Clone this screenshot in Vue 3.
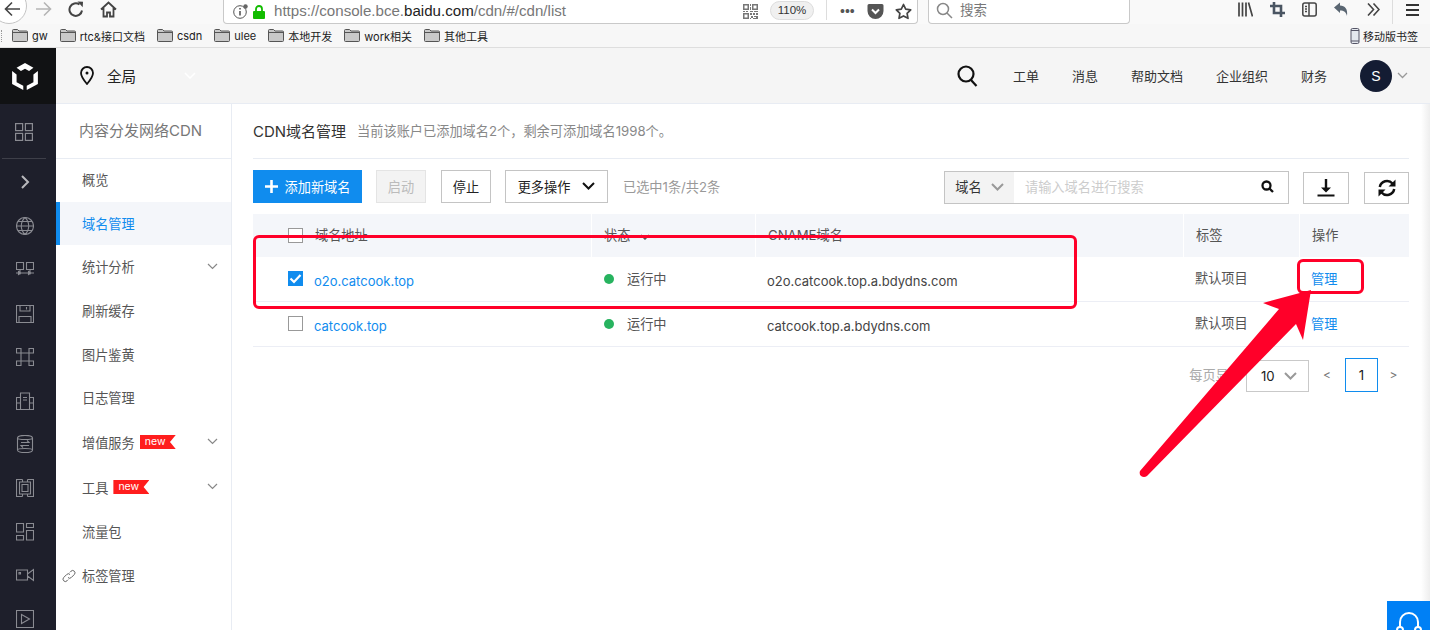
<template>
  <div class="page">
    <!-- browser chrome -->
    <div class="chrome">
      <div class="nav-btns">
        <span class="back">
          <svg width="17" height="16" viewBox="0 0 17 16" fill="none" stroke="#444" stroke-width="1.6"><path d="M16 8H2M8 1.500L1.500 8 8 14.500" /></svg>
        </span>
        <svg class="fwd" width="17" height="16" viewBox="0 0 17 16" fill="none" stroke="#b5b5b5" stroke-width="1.6"><path d="M1 8h14M9 1.500L15.500 8 9 14.500" /></svg>
        <svg class="reload" width="16" height="16" viewBox="0 0 16 16" fill="none" stroke="#444" stroke-width="2"><path d="M14 9.500A6.300 6.300 0 1 1 11.500 3.500" /><path d="M9.500 .5l5.500.3-.3 5.500z" fill="#444" stroke="none" /></svg>
        <svg class="home" width="17" height="17" viewBox="0 0 17 17" fill="none" stroke="#444" stroke-width="1.800"><path d="M1 8.500L8.500 1.500l7.500 7M3.500 7v8.500h3.500v-4h3v4h3.500V7" /></svg>
      </div>
      <div class="urlbar">
        <svg width="16" height="15" viewBox="0 0 16 15" fill="none" stroke="#555"><circle cx="7" cy="8" r="6.300" /><path d="M7 7v4.500M7 4v1.500" stroke-width="1.600" /><circle cx="12.500" cy="2.500" r="2.200" fill="#666" stroke="none" /></svg>
        <svg class="lock" width="12" height="14" viewBox="0 0 12 14" fill="#12bc00"><path d="M1 6h10a1 1 0 0 1 1 1v6a1 1 0 0 1-1 1H1a1 1 0 0 1-1-1V7a1 1 0 0 1 1-1z" /><path d="M3 7V4a3 3 0 0 1 6 0v3" fill="none" stroke="#12bc00" stroke-width="1.800" /></svg>
        <span class="url">https://console.bce.<b>baidu.com</b>/cdn/#/cdn/list</span>
        <svg class="qr" width="15" height="15" viewBox="0 0 15 15" fill="#777"><path d="M0 0h6v6H0zM9 0h6v6H9zM0 9h6v6H0zM1.500 1.500v3h3v-3zM10.500 1.500v3h3v-3zM1.500 10.500v3h3v-3zM7 0h1v2H7zM7 3h1v3H7zM0 7h2v1H0zM3 7h2v1H3zM7 7h3v1H7zM11 7h4v1h-4zM7 9h2v2H7zM10 9h2v2h-2zM13 9h2v2h-2zM8 12h2v2H8zM11 12h2v1h-2zM7 14h1v1H7zM13 12h2v3h-2zM10 14h3v1h-3z" fill-rule="evenodd" /></svg>
        <span class="zoom-pill">110%</span>
        <span class="divider"></span>
        <span class="dots">•••</span>
        <svg class="pocket" width="17" height="15" viewBox="0 0 16 15"><path d="M1.500 0h13A1.500 1.500 0 0 1 16 1.500V7A8 8 0 0 1 0 7V1.500A1.500 1.500 0 0 1 1.500 0z" fill="#555" /><path d="M4.500 5.500L8 9l3.500-3.500" fill="none" stroke="#fff" stroke-width="2" /></svg>
        <svg class="star" width="17" height="17" viewBox="0 0 17 17" fill="none" stroke="#444" stroke-width="1.700"><path d="M8.500 1.500l2.200 4.600 5 .7-3.600 3.500.9 5-4.500-2.400L4 15.300l.9-5L1.300 6.800l5-.7z" stroke-linejoin="round" /></svg>
      </div>
      <div class="searchbar">
        <svg width="17" height="17" viewBox="0 0 17 17" fill="none" stroke="#888" stroke-width="1.500"><circle cx="7" cy="7" r="5.500" /><path d="M11 11l5 5" /></svg>
        <span>搜索</span>
      </div>
      <div class="tools">
        <svg class="t1" width="15" height="15" viewBox="0 0 15 15" fill="none" stroke="#444" stroke-width="1.700"><path d="M1 .5v14M4.500 .5v14M8 .5v14M10.500 .5l4 14" /></svg>
        <svg class="t2" width="15" height="15" viewBox="0 0 15 15" fill="none" stroke="#4a5562" stroke-width="2.600"><path d="M4 0v11h11M0 4h11v11" /></svg>
        <svg class="t3" width="15" height="15" viewBox="0 0 15 15" fill="none" stroke="#444" stroke-width="1.500"><rect x=".8" y="1" width="13.400" height="13" rx="2" /><path d="M7 1v13M3 4.500h2M3 7h2M3 9.500h2" /></svg>
        <svg class="t4" width="15" height="15" viewBox="0 0 15 15"><path d="M0 5.500L6 .5v3c5 0 8 3.500 7 10.500-1-4-3-5.500-7-5.500v2.500z" fill="#5a6672" /></svg>
        <svg class="t5" width="13" height="13" viewBox="0 0 13 13" fill="none" stroke="#444" stroke-width="1.600"><path d="M1 .5l5.500 6-5.500 6M6.500 .5l5.500 6-5.500 6" /></svg>
        <span class="tool-div"></span>
        <svg class="t6" width="13" height="12" viewBox="0 0 13 12" fill="#333"><path d="M0 0h13v2H0zM0 5h13v2H0zM0 10h13v2H0z" /></svg>
      </div>
    </div>

    <div class="bookmarks">
      <span class="grip"></span>
      <span v-for="b in bookmarks" :key="b" class="bm">
        <svg width="16" height="13" viewBox="0 0 16 13"><path d="M.5 1.500a1 1 0 0 1 1-1h4l1.500 1.500h7.500a1 1 0 0 1 1 1v8.500a1 1 0 0 1-1 1h-13a1 1 0 0 1-1-1z" fill="#c9c9c9" stroke="#555" /><path d="M.5 3.500h15" stroke="#555" /></svg>
        {{ b }}
      </span>
      <span class="bm mobile">
        <svg width="10" height="16" viewBox="0 0 10 16"><rect x="1" y=".5" width="8" height="15" rx="1.500" fill="#e4e8ee" stroke="#556" /><path d="M1 2.500h8M1 13h8" stroke="#556" /></svg>
        移动版书签
      </span>
    </div>

    <div class="console">
      <aside class="rail">
        <div class="logo">
          <svg width="26" height="27" viewBox="0 0 25.400 26.600" fill="#fff"><path d="M12.700 0L21 4.700 16.700 8l-4-2.400L8.700 8 4.400 4.700zM0 8l4.400 3.300V19l6.600 3.300v4.300L0 20.600zM25.400 8L21 11.300V19l-6.600 3.300v4.300l11-6z" /></svg>
        </div>
        <div class="rail-top">
          <svg width="18" height="18" viewBox="0 0 18 18" fill="none" stroke="#8a8b92" stroke-width="1.200"><rect x=".6" y=".6" width="7" height="7" /><rect x="10.400" y=".6" width="7" height="7" /><rect x=".6" y="10.400" width="7" height="7" /><rect x="10.400" y="10.400" width="7" height="7" /></svg>
        </div>
        <div class="rail-item toggle">
          <svg width="10" height="14" viewBox="0 0 10 14" fill="none" stroke="#b8b8bc" stroke-width="2"><path d="M2 1l6 6-6 6" /></svg>
        </div>
        <div v-for="(icon, i) in railIcons" :key="i" class="rail-item">
          <svg width="18" height="18" viewBox="0 0 18 18" fill="none" stroke="#8a8b92" stroke-width="1.100">
            <path :d="icon" />
          </svg>
        </div>
      </aside>

      <div class="body">
        <header class="topbar">
          <div class="region">
            <svg width="14" height="19" viewBox="0 0 14 19" fill="none" stroke="#111" stroke-width="1.800"><path d="M7 1a6 6 0 0 1 6 6c0 4-6 11-6 11S1 11 1 7a6 6 0 0 1 6-6z" /><circle cx="7" cy="7" r="1.500" fill="#111" stroke="none" /></svg>
            <span>全局</span>
            <svg class="faint" width="12" height="7" viewBox="0 0 12 7" fill="none" stroke="#fff" stroke-width="1.500"><path d="M1 1l5 5 5-5" /></svg>
          </div>
          <div class="topnav">
            <svg width="21" height="22" viewBox="0 0 21 22" fill="none" stroke="#111" stroke-width="2.200"><circle cx="9" cy="9" r="7.500" /><path d="M14 15l5.500 6" /></svg>
            <a v-for="t in topLinks" :key="t">{{ t }}</a>
          </div>
          <div class="user">
            <span class="avatar">S</span>
            <svg width="11" height="7" viewBox="0 0 11 7" fill="none" stroke="#999" stroke-width="1.300"><path d="M1 1l4.500 4.500L10 1" /></svg>
          </div>
        </header>

        <div class="columns">
          <nav class="side">
            <div class="side-title">内容分发网络CDN</div>
            <div v-for="m in menu" :key="m.label" class="side-item" :class="{ active: m.active, tall: m.isNew, last: m.last }">
              <svg v-if="m.link" class="link" width="14" height="14" viewBox="0 0 14 14" fill="none" stroke="#666" stroke-width="1"><path d="M6 8.500a2.300 2.300 0 0 0 3.300 0l3-3a2.300 2.300 0 0 0-3.300-3.300L7.800 3.400M8 5.500a2.300 2.300 0 0 0-3.300 0l-3 3a2.300 2.300 0 0 0 3.300 3.300l1.200-1.200" /></svg>
              <span>{{ m.label }}</span>
              <span v-if="m.isNew" class="new-tag">new</span>
              <svg v-if="m.arrow" class="arrow" width="11" height="7" viewBox="0 0 11 7" fill="none" stroke="#888" stroke-width="1.200"><path d="M1 1l4.500 4.500L10 1" /></svg>
            </div>
          </nav>

          <main class="main">
            <div class="heading">
              <h1>CDN域名管理</h1>
              <span>当前该账户已添加域名2个，剩余可添加域名1998个。</span>
            </div>

            <div class="toolbar">
              <button class="btn primary">
                <svg width="13" height="13" viewBox="0 0 13 13" fill="#fff"><path d="M5.200 0h2.600v5.200H13v2.600H7.800V13H5.200V7.800H0V5.200h5.200z" /></svg>
                添加新域名
              </button>
              <button class="btn disabled">启动</button>
              <button class="btn">停止</button>
              <button class="btn more">
                更多操作
                <svg width="13" height="9" viewBox="0 0 13 9" fill="none" stroke="#111" stroke-width="2"><path d="M1 1l5.500 5.500L12 1" /></svg>
              </button>
              <span class="selected">已选中1条/共2条</span>
              <div class="search">
                <div class="search-type">
                  域名
                  <svg width="13" height="8" viewBox="0 0 13 8" fill="none" stroke="#999" stroke-width="2"><path d="M1 1l5.500 5.500L12 1" /></svg>
                </div>
                <span class="placeholder">请输入域名进行搜索</span>
                <svg class="search-icon" width="13" height="13" viewBox="0 0 13 13" fill="none" stroke="#111" stroke-width="2.300"><circle cx="5.500" cy="5.500" r="4" /><path d="M8.500 8.500l3.500 3.500" /></svg>
              </div>
              <button class="icon-btn">
                <svg width="18" height="18" viewBox="0 0 18 18" fill="#111"><path d="M7.800 0h2.400v8.500H14L9 13.500 4 8.500h3.800zM.5 15.500h17v2H.5z" /></svg>
              </button>
              <button class="icon-btn">
                <svg width="18" height="18" viewBox="0 0 18 18" fill="none" stroke="#111" stroke-width="2.500"><path d="M1.800 8A7.300 7.300 0 0 1 14.500 4.500M16.200 10A7.300 7.300 0 0 1 3.500 13.500" /><path d="M17.500 .5v7h-7zM.5 17.500v-7h7z" fill="#111" stroke="none" /></svg>
              </button>
            </div>

            <table class="grid">
              <colgroup>
                <col style="width: 338px" />
                <col style="width: 164px" />
                <col style="width: 428px" />
                <col style="width: 116px" />
                <col />
              </colgroup>
              <thead>
                <tr>
                  <th><span class="check"></span>域名地址</th>
                  <th>状态 <svg class="sort" width="10" height="6" viewBox="0 0 10 6" fill="none" stroke="#555" stroke-width="1.500"><path d="M1 1l4 4 4-4" /></svg></th>
                  <th>CNAME域名</th>
                  <th>标签</th>
                  <th>操作</th>
                </tr>
              </thead>
              <tbody>
                <tr v-for="row in rows" :key="row.domain">
                  <td class="latin">
                    <span class="check" :class="{ on: row.checked }">
                      <svg v-if="row.checked" width="15" height="15" viewBox="0 0 15 15" fill="none" stroke="#fff" stroke-width="2.200"><path d="M2.500 7.500l3.500 3.500 6.500-7" /></svg>
                    </span>
                    <a>{{ row.domain }}</a>
                  </td>
                  <td class="status"><i class="dot"></i>运行中</td>
                  <td class="latin">{{ row.cname }}</td>
                  <td class="tag">默认项目</td>
                  <td class="op"><a>管理</a></td>
                </tr>
              </tbody>
            </table>

            <div class="pager">
              <span class="pp">每页显示</span>
              <div class="size">
                10
                <svg width="13" height="8" viewBox="0 0 13 8" fill="none" stroke="#999" stroke-width="2"><path d="M1 1l5.500 5.500L12 1" /></svg>
              </div>
              <span class="pg-arrow">&lt;</span>
              <span class="pg-num">1</span>
              <span class="pg-arrow">&gt;</span>
            </div>
          </main>
        </div>
      </div>
    </div>

    <div class="scroll-shade"></div>
    <div class="help">
      <svg width="28" height="29" viewBox="0 0 28 29" fill="none" stroke="#fff" stroke-width="2"><path d="M5 18v-6a9 9 0 0 1 18 0v6" /><rect x="2" y="17" width="6" height="12" rx="3" /><rect x="20" y="17" width="6" height="12" rx="3" /></svg>
    </div>

    <!-- hand-drawn annotations on top of the screenshot -->
    <div class="note note-row"></div>
    <div class="note note-op"></div>
    <svg class="note-arrow" width="1430" height="630" viewBox="0 0 1430 630">
      <path d="M1311 290L1263 303L1279 309L1140 471Q1139 474 1141 476Q1144 478 1147 476L1296 324L1303 340Z" fill="#ff0029" />
    </svg>
  </div>
</template>

<script setup>
const bookmarks = ['gw', 'rtc&接口文档', 'csdn', 'ulee', '本地开发', 'work相关', '其他工具'];
const topLinks = ['工单', '消息', '帮助文档', '企业组织', '财务'];

const railIcons = [
  // globe
  'M9 .5a8.500 8.500 0 1 0 0 17 8.500 8.500 0 0 0 0-17zM.5 9h17M2 4.500h14M2 13.500h14M9 .5c-5 5-5 12 0 17M9 .5c5 5 5 12 0 17',
  // network
  'M.5 1.500h7v7h-7zM10.500 1.500h7v7h-7zM4 8.500v5M14 8.500v5M0 12h18M2.500 10.500v3L5 12zM12.500 10.500v3L15 12z',
  // floppy
  'M.5 .5h17v17H.5zM4 .5v5.500h10V.5M10.500 2v2.500M3 17.500v-6h12v6',
  // cmd
  'M.5 .5h4.500v4.500H.5zM13 .5h4.500v4.500H13zM.5 13h4.500v4.500H.5zM13 13h4.500v4.500H13zM5 5h8v8H5z',
  // building
  'M4.500 17.500V1h9v16.500M.5 5.500h4v12h-4zM13.500 5.500h4v12h-4zM7 5.500h4M7 8h4M.5 11h4M13.500 11h4M4.500 17.500h9',
  // cylinder
  'M1.500 3c0-3.500 15-3.500 15 0v12c0 3.500-15 3.500-15 0zM1.500 3c0 2 15 2 15 0M1.500 15c0-2 15-2 15 0M5 7.500h8l-2-2M13 10.500H5l2 2',
  // chip
  'M6.500 .5H.5v17h6M11.500 .5h6v17h-6M6.500 .5V3h5V.5M6.500 17.500V15h5v2.500M3.500 3h11v12h-11zM6 5.500h6v7H6z',
  // panels
  'M.5 .5h7v8.500h-7zM10.500 .5h7v4h-7zM.5 12.500h7v4.500h-7zM10.500 7.500h7v9.500h-7z',
  // video
  'M.5 4h11v10H.5zM11.500 8l6-4.500v11L11.500 10M3 6.500h1.500V8H3z',
  // play
  'M.5 .5h17v17H.5zM5.500 4.500l8 4.500-8 4.500z',
];

const menu = [
  { label: '概览' },
  { label: '域名管理', active: true },
  { label: '统计分析', arrow: true },
  { label: '刷新缓存' },
  { label: '图片鉴黄' },
  { label: '日志管理' },
  { label: '增值服务', isNew: true, arrow: true },
  { label: '工具', isNew: true, arrow: true },
  { label: '流量包', last: true },
  { label: '标签管理', link: true, last: true },
];

const rows = [
  { domain: 'o2o.catcook.top', cname: 'o2o.catcook.top.a.bdydns.com', checked: true },
  { domain: 'catcook.top', cname: 'catcook.top.a.bdydns.com', checked: false },
];
</script>

<style>
html,
body {
  margin: 0;
  overflow: hidden;
  background: #fff;
}
</style>

<style scoped>
.page {
  position: relative;
  width: 1430px;
  height: 630px;
  overflow: hidden;
  font-family: Inter, "Noto Sans CJK SC", sans-serif;
  font-size: 13.2px;
  color: #444;
}

.chrome {
  height: 24px;
  display: flex;
  align-items: flex-end;
  background: #f9f9f9;
  overflow: hidden;
}
.nav-btns {
  width: 223px;
  height: 24px;
  flex: none;
  display: flex;
  align-items: center;
}
.back {
  width: 36px;
  height: 36px;
  margin: -12px 0 0 -9px;
  border: 1px solid #c4c4c4;
  border-radius: 50%;
  background: #fff;
  flex: none;
  display: flex;
  align-items: center;
  justify-content: center;
  padding: 6px 0 0 6px;
  box-sizing: border-box;
}
.fwd { margin: -6px 0 0 8px; }
.reload { margin: -6px 0 0 16px; }
.home { margin: -5px 0 0 16px; }

.urlbar,
.searchbar {
  height: 30px;
  box-sizing: border-box;
  background: #fff;
  border: 1px solid #c9c9c9;
  border-top: 0;
  border-radius: 0 0 4px 4px;
  display: flex;
  align-items: flex-end;
  padding-bottom: 4px;
}
.urlbar {
  width: 695px;
  padding-left: 9px;
  flex: none;
}
.lock { margin-left: 4px; }
.url {
  margin-left: 9px;
  width: 469px;
  flex: none;
  font-family: "Liberation Sans", sans-serif;
  font-size: 15.1px;
  line-height: 17px;
  color: #777;
  white-space: nowrap;
}
.url b {
  font-weight: 400;
  color: #222;
}
.zoom-pill {
  width: 44px;
  height: 19px;
  margin: 0 0 -1px 12px;
  border: 1px solid #ddd;
  border-radius: 10px;
  background: #f0f0f0;
  box-sizing: border-box;
  flex: none;
  font-family: "Liberation Sans", sans-serif;
  font-size: 11.5px;
  line-height: 17px;
  text-align: center;
  color: #333;
}
.divider {
  width: 1px;
  height: 20px;
  background: #ddd;
  margin: 0 0 -1px 12px;
  flex: none;
}
.dots {
  margin-left: 13px;
  font: 14px/15px "Liberation Sans", sans-serif;
  color: #555;
}
.pocket { margin-left: 12px; }
.star { margin-left: 11px; margin-bottom: -1px; }

.searchbar {
  width: 202px;
  margin-left: 10px;
  padding-left: 7px;
  flex: none;
  color: #777;
  font-size: 13.5px;
  line-height: 17px;
}
.searchbar span { margin-left: 7px; }

.tools {
  flex: 1;
  height: 24px;
  display: flex;
  align-items: center;
  padding-left: 108px;
  padding-bottom: 5px;
  box-sizing: border-box;
}
.t2,
.t3,
.t4 { margin-left: 17px; }
.t5 { margin-left: 18px; }
.tool-div {
  width: 1px;
  height: 24px;
  background: #ddd;
  margin: 4px 0 0 12px;
}
.t6 { margin-left: 13px; }

.bookmarks {
  height: 24px;
  box-sizing: border-box;
  display: flex;
  align-items: center;
  gap: 12px;
  padding-left: 12px;
  background: #f7f7f7;
  border-bottom: 1px solid #dedede;
  font-size: 11px;
  color: #222;
  position: relative;
}
.grip {
  position: absolute;
  left: 1px;
  top: 6px;
  height: 12px;
  border-left: 1px dotted #999;
}
.bm {
  display: flex;
  align-items: center;
  gap: 4px;
  white-space: nowrap;
}
.mobile {
  margin-left: auto;
  margin-right: 12px;
  gap: 3px;
}

.console {
  display: flex;
  height: 582px;
}
.rail {
  width: 56px;
  flex: none;
  background: #1e1f2b;
}
.logo {
  height: 56px;
  box-sizing: border-box;
  padding-right: 6px;
  background: #111214;
  display: flex;
  align-items: center;
  justify-content: center;
}
.rail-top {
  width: 44px;
  height: 55px;
  margin-left: 2px;
  box-sizing: border-box;
  padding-top: 1px;
  border-bottom: 1px solid #3e3f49;
  display: flex;
  align-items: center;
  justify-content: center;
}
.rail-item {
  height: 43.6px;
  box-sizing: border-box;
  padding-right: 7px;
  display: flex;
  align-items: center;
  justify-content: center;
}
.rail-item.toggle {
  height: 45.6px;
}

.body {
  flex: 1;
  min-width: 0;
  display: flex;
  flex-direction: column;
}
.topbar {
  height: 56px;
  flex: none;
  box-sizing: border-box;
  display: flex;
  align-items: center;
  background: #f5f5f5;
  border-bottom: 1px solid #e8ecf3;
  font-family: "Liberation Sans", "Noto Sans CJK SC", sans-serif;
  color: #333;
}
.region {
  display: flex;
  align-items: center;
  padding-left: 24px;
  font-size: 14.5px;
  color: #222;
}
.region span { margin-left: 13px; }
.faint { margin-left: 48px; }
.topnav {
  margin-left: auto;
  display: flex;
  align-items: center;
  gap: 33px;
  font-size: 13px;
}
.topnav svg { margin-right: 2px; }
.user {
  display: flex;
  align-items: center;
  gap: 5px;
  margin: 0 22px 0 33px;
}
.avatar {
  width: 32px;
  height: 32px;
  border-radius: 50%;
  background: #141c33;
  color: #fff;
  font-size: 14px;
  display: flex;
  align-items: center;
  justify-content: center;
}

.columns {
  flex: 1;
  display: flex;
  min-height: 0;
}
.side {
  width: 176px;
  flex: none;
  box-sizing: border-box;
  border-right: 1px solid #e8ecf3;
  background: #fff;
}
.side-title {
  height: 55px;
  margin-bottom: -1px;
  box-sizing: border-box;
  padding-left: 23px;
  line-height: 54px;
  border-bottom: 1px solid #e8ecf3;
  font-size: 15px;
  color: #777;
}
.side-item {
  height: 43.6px;
  position: relative;
  display: flex;
  align-items: center;
  padding-left: 26px;
  color: #555;
}
.side-item.tall { height: 45px; }
.side-item.last { height: 44px; }
.side-item.active {
  background: #f4f6fa;
  color: #108cee;
  box-shadow: inset 4px 0 0 #108cee;
}
.arrow {
  position: absolute;
  right: 13px;
  top: 50%;
  margin-top: -4px;
}
.link {
  position: absolute;
  left: 6px;
}
.new-tag {
  margin-left: 5px;
  width: 36px;
  height: 14px;
  box-sizing: border-box;
  padding-left: 5px;
  background: #ff1d1d;
  clip-path: polygon(0 0, 100% 0, 84% 50%, 100% 100%, 0 100%);
  color: #fff;
  font-size: 10.5px;
  line-height: 14px;
}

.main {
  flex: 1;
  min-width: 0;
  padding: 0 21px;
}
.heading {
  height: 55px;
  box-sizing: border-box;
  padding-bottom: 2px;
  border-bottom: 1px solid #e8ecf3;
  display: flex;
  align-items: center;
  gap: 11px;
}
.heading h1 {
  margin: 0;
  font-size: 15px;
  font-weight: 400;
  color: #333;
}
.heading span {
  font-size: 13.2px;
  color: #888;
}
.toolbar {
  height: 33px;
  margin-top: 11px;
  display: flex;
  align-items: center;
}
.btn {
  height: 33px;
  box-sizing: border-box;
  padding: 0;
  border: 1px solid #c4c4c4;
  background: #fff;
  font: inherit;
  color: #222;
  width: 50px;
  margin-right: 14px;
}
.btn.primary {
  width: 109px;
  background: #108cee;
  border-color: #108cee;
  color: #fff;
  display: flex;
  align-items: center;
  justify-content: center;
  gap: 7px;
}
.btn.disabled {
  margin-right: 15px;
  background: #f3f3f3;
  border-color: #e4e4e4;
  color: #bbb;
}
.btn.more {
  width: 103px;
  display: flex;
  align-items: center;
  justify-content: center;
  gap: 12px;
}
.selected {
  margin-left: 1px;
  font-size: 13.2px;
  color: #999;
  white-space: nowrap;
}
.search {
  margin: 2px 0 0 auto;
  width: 345px;
  height: 33px;
  box-sizing: border-box;
  display: flex;
  align-items: center;
  border: 1px solid #c4c4c4;
  padding-right: 14px;
}
.search-type {
  width: 69px;
  height: 100%;
  flex: none;
  box-sizing: border-box;
  padding-bottom: 2px;
  background: #f3f3f3;
  display: flex;
  align-items: center;
  justify-content: center;
  gap: 9px;
  color: #333;
}
.placeholder {
  flex: 1;
  padding: 0 0 2px 11px;
  color: #ccc;
}
.search-icon { margin-bottom: 2px; }
.icon-btn {
  width: 46px;
  height: 32px;
  margin: 3px 0 0 14px;
  padding: 0;
  border: 1px solid #c4c4c4;
  background: #fff;
  display: flex;
  align-items: center;
  justify-content: center;
}
.icon-btn:last-child {
  width: 45px;
  margin-left: 15px;
}

.grid {
  width: 1156px;
  margin-top: 11px;
  border-collapse: separate;
  border-spacing: 0;
  table-layout: fixed;
}
.grid th,
.grid td {
  position: relative;
  box-sizing: border-box;
  padding: 0 0 0 12px;
}
.grid th {
  height: 43px;
  padding-bottom: 2px;
  background: #f4f6fa;
  border-left: 1px solid #fff;
  font-weight: 400;
  text-align: left;
  color: #555;
}
.grid th:first-child {
  padding-left: 62px;
  border-left: 0;
}
.grid td {
  height: 45px;
  border-bottom: 1px solid #eceef5;
  color: #555;
}
.grid td:first-child { padding-left: 61px; }
.grid td.latin {
  padding-top: 3px;
  font-size: 13px;
  color: #444;
}
.grid td.tag { padding-bottom: 3px; }
.grid td.op { padding-bottom: 1px; }
.grid a { color: #108cee; }
.check {
  position: absolute;
  left: 35px;
  top: 50%;
  margin-top: -8px;
  width: 15px;
  height: 15px;
  box-sizing: border-box;
  border: 1px solid #999;
  background: #fff;
  display: block;
}
.check.on {
  background: #108cee;
  border-color: #108cee;
}
.check.on svg {
  display: block;
  margin: -1px;
}
.sort { margin-left: 6px; }
.grid td.status { padding-left: 13px; padding-bottom: 2px; }
.dot {
  display: inline-block;
  width: 10px;
  height: 10px;
  border-radius: 50%;
  background: #27b35f;
  margin-right: 13px;
}

.pager {
  display: flex;
  align-items: center;
  justify-content: flex-end;
  height: 35px;
  margin-top: 10px;
}
.pp {
  color: #aaa;
  margin-right: 4px;
}
.size {
  width: 63px;
  height: 32px;
  margin-top: 2px;
  box-sizing: border-box;
  border: 1px solid #c9c9c9;
  display: flex;
  align-items: center;
  gap: 9px;
  padding-left: 14px;
  color: #222;
}
.pg-arrow {
  width: 36px;
  text-align: center;
  color: #777;
  font-size: 12px;
}
.pg-num {
  width: 33px;
  height: 34px;
  box-sizing: border-box;
  border: 1px solid #108cee;
  display: flex;
  align-items: center;
  justify-content: center;
  color: #222;
}
.pg-num + .pg-arrow { width: 31px; }

.scroll-shade {
  position: absolute;
  right: 0;
  top: 104px;
  bottom: 0;
  width: 9px;
  background: linear-gradient(to right, #fff, #eee);
}
.help {
  position: absolute;
  right: 0;
  bottom: 0;
  width: 43px;
  height: 29px;
  background: #0080f5;
  display: flex;
  justify-content: center;
  padding-top: 9px;
  box-sizing: border-box;
  overflow: hidden;
}
.help svg { flex: none; }

.note {
  position: absolute;
  box-sizing: border-box;
  border: 3px solid #ff0029;
  border-radius: 6px;
  pointer-events: none;
}
.note-row {
  left: 253px;
  top: 235px;
  width: 824px;
  height: 74px;
}
.note-op {
  left: 1297px;
  top: 259px;
  width: 67px;
  height: 35px;
}
.note-arrow {
  position: absolute;
  left: 0;
  top: 0;
  pointer-events: none;
}
</style>
